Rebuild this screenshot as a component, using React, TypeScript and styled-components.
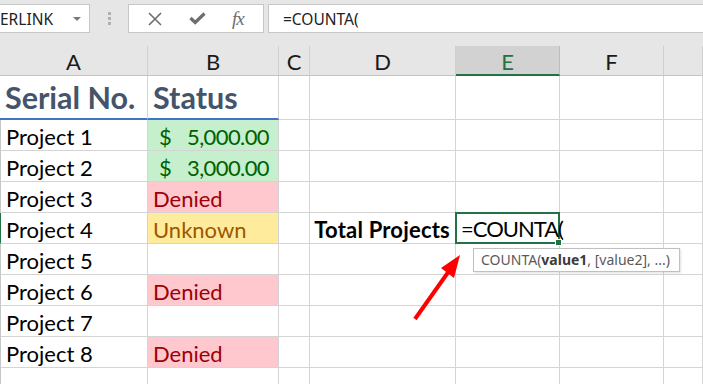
import styled, { createGlobalStyle } from 'styled-components';

const GlobalStyle = createGlobalStyle`
  html, body {
    margin: 0;
    padding: 0;
    background: #ffffff;
    overflow: hidden;
  }
`;

const CELL_FONT = "Lato, 'Noto Sans', sans-serif";
const UI_FONT = "'Noto Sans', 'Open Sans', sans-serif";
const GRID = '#d4d4d4';

const Page = styled.div`
  width: 703px;
  height: 384px;
  display: flex;
  flex-direction: column;
  overflow: hidden;
`;

const FormulaBar = styled.div`
  height: 46px;
  flex: 0 0 46px;
  display: flex;
  align-items: flex-start;
  padding-top: 4px;
  box-sizing: border-box;
  background: #e6e6e6;
  gap: 4px;
`;

const NameBox = styled.div`
  width: 90px;
  height: 29px;
  box-sizing: border-box;
  background: #fff;
  border: 1px solid #c6c6c6;
  border-left: none;
  display: flex;
  align-items: center;
  justify-content: space-between;
  padding-right: 8px;
  font-family: ${UI_FONT};
  font-size: 15.5px;
  color: #222;
  overflow: hidden;
`;

const DropArrow = styled.span`
  width: 0;
  height: 0;
  border-left: 4px solid transparent;
  border-right: 4px solid transparent;
  border-top: 4px solid #7a7a7a;
`;

const Grip = styled.div`
  width: 30px;
  height: 29px;
  display: flex;
  flex-direction: column;
  align-items: center;
  justify-content: center;
  gap: 2px;
  & > span {
    width: 3px;
    height: 3px;
    background: #b0b0b0;
  }
`;

const ButtonBox = styled.div`
  width: 136px;
  height: 29px;
  box-sizing: border-box;
  background: #fff;
  border: 1px solid #c6c6c6;
  display: flex;
  align-items: center;
  justify-content: space-around;
  padding: 0 6px;
  color: #6d6d6d;
`;

const Fx = styled.span`
  font-family: 'Liberation Serif', serif;
  font-style: italic;
  font-size: 19px;
  color: #6d6d6d;
  letter-spacing: -1px;
`;

const FormulaInput = styled.div`
  flex: 1;
  height: 29px;
  box-sizing: border-box;
  background: #fff;
  border: 1px solid #c6c6c6;
  border-right: none;
  display: flex;
  align-items: center;
  padding-left: 14px;
  font-family: ${UI_FONT};
  font-size: 15.5px;
  color: #222;
`;

const Sheet = styled.div`
  position: relative;
  flex: 1;
  display: grid;
  grid-template-columns: 148px 131px 31px 146px 104px 104px 1fr;
  grid-template-rows: 30px 44px repeat(9, 31px);
  font-family: ${CELL_FONT};
`;

const ColHead = styled.div<{ $active?: boolean }>`
  box-sizing: border-box;
  display: flex;
  align-items: center;
  justify-content: center;
  background: ${(p) => (p.$active ? '#d2d2d2' : '#e6e6e6')};
  border-right: 1px solid ${(p) => (p.$active ? '#bdbdbd' : '#d0d0d0')};
  border-bottom: ${(p) => (p.$active ? '2px solid #217346' : '1px solid #c4c4c4')};
  color: ${(p) => (p.$active ? '#217346' : '#1a1a1a')};
  font-size: 22px;
  padding-top: 2px;
`;

const Cell = styled.div<{
  $fill?: string;
  $color?: string;
  $title?: boolean;
  $bold?: boolean;
  $align?: 'left' | 'right' | 'split';
  $edge?: string;
}>`
  position: relative;
  box-sizing: border-box;
  display: flex;
  align-items: flex-end;
  justify-content: ${(p) =>
    p.$align === 'right' ? 'flex-end' : p.$align === 'split' ? 'space-between' : 'flex-start'};
  padding: ${(p) => (p.$align === 'split' ? '0 9px 0 11px' : '0 5px 0 5px')};
  background: ${(p) => p.$fill || '#fff'};
  color: ${(p) => p.$color || '#000'};
  border-right: 1px solid ${GRID};
  border-bottom: ${(p) => (p.$title ? '2px solid #4472c4' : `1px solid ${GRID}`)};
  border-left: ${(p) => (p.$edge ? `1px solid ${p.$edge}` : 'none')};
  font-size: ${(p) => (p.$title ? '30.5px' : '22px')};
  font-weight: ${(p) => (p.$title || p.$bold ? 700 : 400)};
  line-height: 1.2;
  white-space: nowrap;
  overflow: visible;
  ${(p) => (p.$title ? 'color: #44546a; padding-bottom: 2px;' : '')}
  ${(p) => (p.$bold ? 'letter-spacing: 0.2px;' : '')}
`;

const Amount = styled.span`
  letter-spacing: -0.6px;
`;

const EditCell = styled(Cell)`
  border: 2px solid #217346;
  margin: -1px 0 0 -1px;
  padding-left: 4px;
  letter-spacing: -1px;
  z-index: 2;
  &::after {
    content: '';
    position: absolute;
    right: -4px;
    bottom: -4px;
    width: 5px;
    height: 5px;
    background: #217346;
    border: 1px solid #fff;
  }
`;

const Caret = styled.span`
  display: inline-block;
  width: 1px;
  height: 28px;
  background: #000;
  margin-left: 2px;
  align-self: center;
`;

const Tooltip = styled.div`
  position: absolute;
  left: 16px;
  top: 34px;
  height: 24px;
  box-sizing: border-box;
  padding: 0 9px 0 7px;
  display: flex;
  align-items: center;
  background: #fff;
  border: 1px solid #c0c0c0;
  box-shadow: 1px 1px 2px rgba(0, 0, 0, 0.12);
  font-family: ${UI_FONT};
  font-size: 14px;
  font-weight: 400;
  letter-spacing: 0;
  color: #5a5a5a;
  white-space: nowrap;
  & b {
    color: #3c3c3c;
    font-weight: 700;
  }
`;

const Arrow = styled.svg`
  position: absolute;
  left: 400px;
  top: 200px;
  overflow: visible;
  pointer-events: none;
  z-index: 3;
`;

type Status =
  | { kind: 'money'; value: string }
  | { kind: 'denied' }
  | { kind: 'unknown' }
  | { kind: 'empty' };

const rows: { name: string; status: Status }[] = [
  { name: 'Project 1', status: { kind: 'money', value: '5,000.00' } },
  { name: 'Project 2', status: { kind: 'money', value: '3,000.00' } },
  { name: 'Project 3', status: { kind: 'denied' } },
  { name: 'Project 4', status: { kind: 'unknown' } },
  { name: 'Project 5', status: { kind: 'empty' } },
  { name: 'Project 6', status: { kind: 'denied' } },
  { name: 'Project 7', status: { kind: 'empty' } },
  { name: 'Project 8', status: { kind: 'denied' } },
  { name: '', status: { kind: 'empty' } },
];

const StatusCell = ({ status }: { status: Status }) => {
  if (status.kind === 'money')
    return (
      <Cell $fill="#c6efce" $color="#006100" $align="split">
        <span>$</span>
        <Amount>{status.value}</Amount>
      </Cell>
    );
  if (status.kind === 'denied')
    return (
      <Cell $fill="#ffc7ce" $color="#9c0006">
        Denied
      </Cell>
    );
  if (status.kind === 'unknown')
    return (
      <Cell $fill="#ffeb9c" $color="#9c5700">
        Unknown
      </Cell>
    );
  return <Cell />;
};

const XIcon = () => (
  <svg width="14" height="14" viewBox="0 0 14 14">
    <path d="M1 1 L13 13 M13 1 L1 13" stroke="#6d6d6d" strokeWidth="1.6" fill="none" />
  </svg>
);

const CheckIcon = () => (
  <svg width="17" height="13" viewBox="0 0 17 13">
    <path d="M1.5 6 L6.2 10.5 L15.5 1.5" stroke="#6d6d6d" strokeWidth="3.2" fill="none" />
  </svg>
);

const App = () => {
  const headers = ['A', 'B', 'C', 'D', 'E', 'F', ''];
  return (
    <Page>
      <GlobalStyle />
      <FormulaBar>
        <NameBox>
          <span>ERLINK</span>
          <DropArrow />
        </NameBox>
        <Grip>
          <span />
          <span />
          <span />
        </Grip>
        <ButtonBox>
          <XIcon />
          <CheckIcon />
          <Fx>fx</Fx>
        </ButtonBox>
        <FormulaInput>=COUNTA(</FormulaInput>
      </FormulaBar>
      <Sheet>
        {headers.map((h, i) => (
          <ColHead key={`h${i}`} $active={h === 'E'}>
            {h}
          </ColHead>
        ))}

        <Cell $title>Serial No.</Cell>
        <Cell $title>Status</Cell>
        <Cell />
        <Cell />
        <Cell />
        <Cell />
        <Cell />

        {rows.map((r, i) => {
          const editRow = i === 3;
          return [
            <Cell key={`a${i}`} $edge={editRow ? '#217346' : '#c6c6c6'}>
              {r.name}
            </Cell>,
            <StatusCell key={`b${i}`} status={r.status} />,
            <Cell key={`c${i}`} />,
            editRow ? (
              <Cell key={`d${i}`} $bold $align="right">
                Total Projects
              </Cell>
            ) : (
              <Cell key={`d${i}`} />
            ),
            editRow ? (
              <EditCell key={`e${i}`}>
                =COUNTA(
                <Caret />
                <Tooltip>
                  COUNTA(<b>value1</b>, [value2], ...)
                </Tooltip>
              </EditCell>
            ) : (
              <Cell key={`e${i}`} />
            ),
            <Cell key={`f${i}`} />,
            <Cell key={`g${i}`} />,
          ];
        })}

        <Arrow width="70" height="80" viewBox="0 0 70 80">
          <line x1="15" y1="73" x2="49" y2="25" stroke="#ff0000" strokeWidth="4" />
          <polygon points="60,9 54,32 41,22" fill="#ff0000" />
        </Arrow>
      </Sheet>
    </Page>
  );
};

export default App;
